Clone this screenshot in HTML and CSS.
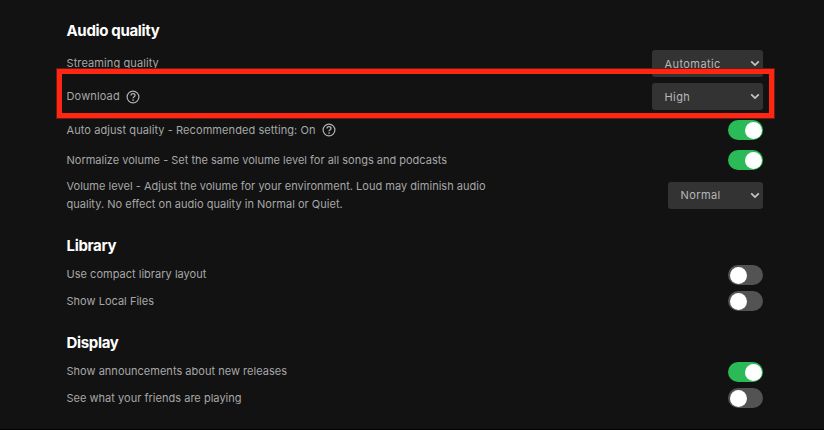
FILE: index.html
```html
<!DOCTYPE html>
<html lang="en">
<head>
<meta charset="utf-8">
<title>Settings</title>
<link rel="stylesheet" href="styles.css">
</head>
<body>
<svg class="defs" aria-hidden="true">
  <symbol id="help" viewBox="0 0 14 14"><circle cx="7" cy="7" r="5.9" fill="none" stroke="currentColor" stroke-width="1.2"/><path d="M5 5.6C5 4.4 5.8 3.7 7 3.7s2 .7 2 1.7c0 1.3-1.9 1.4-1.9 2.9" fill="none" stroke="currentColor" stroke-width="1.25"/><circle cx="7.1" cy="10" r=".85" fill="currentColor"/></symbol>
  <symbol id="chevron" viewBox="0 0 10 7"><path d="M1.2 1.3 5 5.1l3.8-3.8" fill="none" stroke="currentColor" stroke-width="1.8"/></symbol>
</svg>
<main class="settings">
  <section class="section audio">
    <h2>Audio quality</h2>
    <div class="row select-row streaming"><span class="label">Streaming quality</span><div class="select"><span class="value">Automatic</span><svg class="chevron"><use href="#chevron"/></svg></div></div>
    <div class="row select-row download"><span class="label">Download</span><svg class="help"><use href="#help"/></svg><div class="select"><span class="value">High</span><svg class="chevron"><use href="#chevron"/></svg></div><div class="highlight"></div></div>
    <div class="row auto"><span class="label">Auto adjust quality - Recommended setting: On</span><svg class="help"><use href="#help"/></svg><div class="toggle on"></div></div>
    <div class="row normalize"><span class="label">Normalize volume - Set the same volume level for all songs and podcasts</span><div class="toggle on"></div></div>
    <div class="row volume"><span class="label">Volume level - Adjust the volume for your environment. Loud may diminish audio<br>quality. No effect on audio quality in Normal or Quiet.</span><div class="select narrow"><span class="value">Normal</span><svg class="chevron"><use href="#chevron"/></svg></div></div>
  </section>
  <section class="section library">
    <h2>Library</h2>
    <div class="row first"><span class="label">Use compact library layout</span><div class="toggle"></div></div>
    <div class="row"><span class="label">Show Local Files</span><div class="toggle"></div></div>
  </section>
  <section class="section display">
    <h2>Display</h2>
    <div class="row first"><span class="label">Show announcements about new releases</span><div class="toggle on"></div></div>
    <div class="row"><span class="label">See what your friends are playing</span><div class="toggle"></div></div>
  </section>
</main>
</body>
</html>
```
FILE: styles.css
```css
* { box-sizing: border-box; }
body { margin: 0; background: #121212; color: #a7a7a7; font: 11px/18px Inter, "Liberation Sans", sans-serif; letter-spacing: .02px; }
.defs { position: absolute; width: 0; height: 0; }
.settings { height: 430px; padding: 19px 61px 0 66.5px; border-bottom: 1px solid #000; overflow: hidden; }
h2 { margin: 0; height: 24px; font-size: 15px; line-height: 24px; font-weight: 700; color: #fff; letter-spacing: -.33px; }
.row { display: flex; align-items: center; height: 20px; margin-top: 6px; white-space: nowrap; }
.select-row { height: 27px; position: relative; }
.audio h2 { margin-bottom: 7px; }
.streaming { margin-top: 0; letter-spacing: .1px; }
.download { letter-spacing: .15px; }
.select-row .label, .first .label { padding-bottom: 2px; }
.auto, .normalize { margin-top: 10px; }
.auto { letter-spacing: .08px; }
.normalize { letter-spacing: 0; }
.volume { height: 36px; margin-top: 7px; }
.library { padding-top: 21px; }
.display { padding-top: 20px; }
.row.first { margin-top: 7px; }
.help { width: 14px; height: 14px; margin-left: 6.5px; color: #b3b3b3; }
.select { display: flex; align-items: center; justify-content: space-between; width: 111px; height: 27px; margin-left: auto; padding: 0 3px 0 12.5px; border-radius: 3px; background: #333; color: #b8b8b8; letter-spacing: .42px; }
.select.narrow { width: 95px; }
.chevron { width: 10px; height: 7px; color: #c4c4c4; }
.toggle { width: 35px; height: 20px; margin-left: auto; padding: 1.5px; border-radius: 10px; background: #535353; display: flex; }
.toggle::before { content: ""; width: 17px; height: 17px; border-radius: 50%; background: #fff; }
.toggle.on { background: #2abb58; justify-content: flex-end; }
.highlight { position: absolute; left: -9.5px; right: -11px; top: -14px; height: 49px; border: 5px solid #ff2614; box-shadow: 0 0 0 1px #6b1a13; }
```
